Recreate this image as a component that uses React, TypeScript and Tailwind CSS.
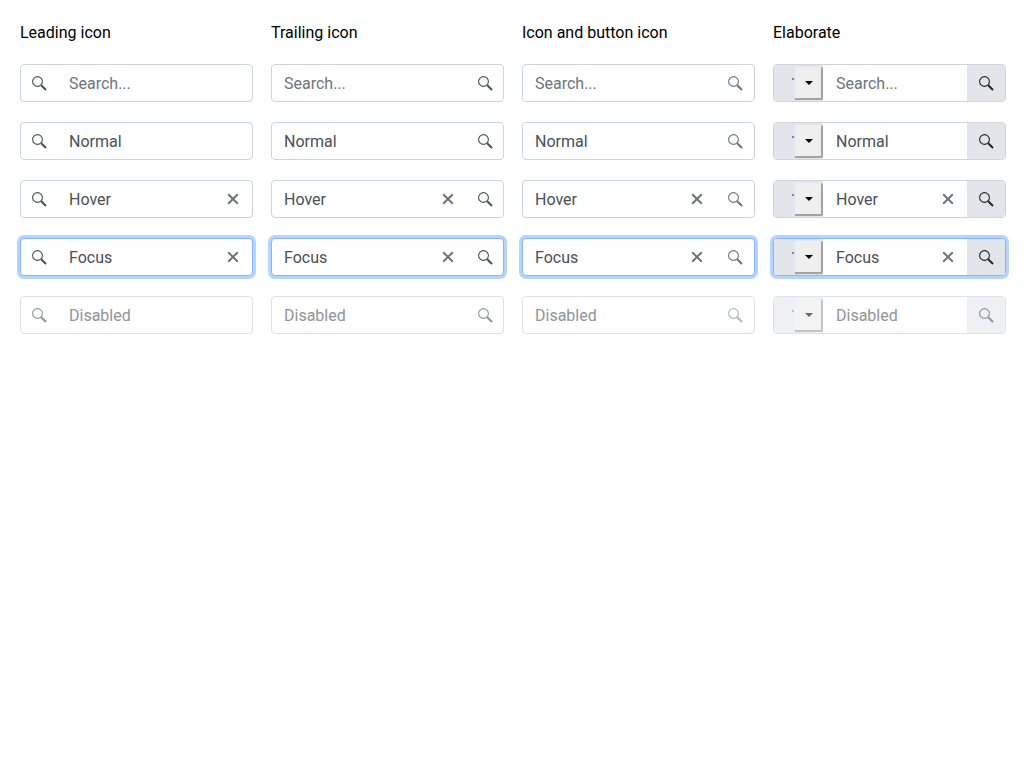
const rows = [
  { kind: "placeholder", label: "Search..." },
  { kind: "normal", label: "Normal" },
  { kind: "hover", label: "Hover" },
  { kind: "focus", label: "Focus" },
  { kind: "disabled", label: "Disabled" },
];

const headers = ["Leading icon", "Trailing icon", "Icon and button icon", "Elaborate"];

type Row = { kind: string; label: string };

const SearchIcon = () => (
  <svg viewBox="0 0 15 15" className="size-[15px]" fill="none" stroke="currentColor">
    <circle cx="5.5" cy="5.5" r="4.9" strokeWidth="1.1" />
    <path d="M9.2 9.2 L14 14" strokeWidth="2" />
  </svg>
);

const ClearIcon = () => (
  <svg viewBox="0 0 12 12" className="size-[12px]" fill="none" stroke="currentColor" strokeWidth="2">
    <path d="M1.2 1.2 L10.8 10.8 M10.8 1.2 L1.2 10.8" />
  </svg>
);

const Shell = ({ row, children }: { row: Row; children: React.ReactNode }) => (
  <div
    className={`flex h-[38px] items-stretch overflow-hidden rounded border bg-white ${
      row.kind === "focus"
        ? "border-[#86b7fe] shadow-[0_0_0_3px_#b6d4fe] overflow-visible"
        : row.kind === "disabled"
          ? "border-[#dee2e6]"
          : "border-[#ced4da]"
    }`}
  >
    {children}
  </div>
);

const Field = ({ row, className }: { row: Row; className: string }) => (
  <input
    readOnly
    disabled={row.kind === "disabled"}
    placeholder={row.kind === "placeholder" ? row.label : undefined}
    defaultValue={row.kind === "placeholder" ? undefined : row.label}
    className={`min-w-0 flex-1 bg-transparent pt-[2px] text-base leading-6 outline-none placeholder:text-[#6c757d] ${
      row.kind === "disabled" ? "text-[#8f9499]" : "text-[#495057]"
    } ${className}`}
  />
);

const hasClear = (row: Row) => row.kind === "hover" || row.kind === "focus";

const Clear = () => (
  <div className="flex w-[38px] items-center justify-center text-[#6c757d]">
    <ClearIcon />
  </div>
);

const Leading = ({ row }: { row: Row }) => (
  <Shell row={row}>
    <div className={`flex w-[26px] items-center justify-end pt-px ${row.kind === "disabled" ? "text-[#8f9499]" : "text-[#495057]"}`}>
      <SearchIcon />
    </div>
    <Field row={row} className="pl-[22px]" />
    {hasClear(row) && <Clear />}
  </Shell>
);

const Trailing = ({ row }: { row: Row }) => (
  <Shell row={row}>
    <Field row={row} className="pl-[12px]" />
    {hasClear(row) && <Clear />}
    <div className={`flex w-[36px] items-center justify-center pl-px pt-px ${row.kind === "disabled" ? "text-[#8f9499]" : "text-[#495057]"}`}>
      <SearchIcon />
    </div>
  </Shell>
);

const IconButton = ({ row }: { row: Row }) => (
  <Shell row={row}>
    <Field row={row} className="pl-[12px]" />
    {hasClear(row) && <Clear />}
    <div className={`flex w-[38px] items-center justify-center pl-px pt-px ${row.kind === "disabled" ? "text-[#adb5bd]" : "text-[#6c757d]"}`}>
      <SearchIcon />
    </div>
  </Shell>
);

const Elaborate = ({ row }: { row: Row }) => {
  const off = row.kind === "disabled";
  return (
    <Shell row={row}>
      <div className={`flex w-[49px] items-start rounded-l-[3px] ${off ? "bg-[#eef0f3]" : "bg-[#e2e5ea]"}`}>
        <div className={`ml-[18px] mt-[13px] size-[2px] ${off ? "bg-[#c0c2c6]" : "bg-[#85888d]"}`} />
        <div
          className={`ml-px mt-[2px] flex h-[33px] w-[28px] items-center justify-center rounded-r-[2px] border-r-2 border-b-2 pl-[2px] ${
            off ? "border-[#c4c4c4] bg-[#f3f3f3]" : "border-[#a3a3a3] bg-[#efefef]"
          }`}
        >
          <div
            className={`h-0 w-0 border-x-[4px] border-t-[4px] border-x-transparent ${
              off ? "border-t-[#666]" : "border-t-black"
            }`}
          />
        </div>
      </div>
      <Field row={row} className="pl-[13px]" />
      {hasClear(row) && <Clear />}
      <div
        className={`flex w-[38px] items-center justify-center rounded-r-[3px] pl-px pt-px ${
          off ? "bg-[#eef0f3] text-[#8f9499]" : "bg-[#e2e5ea] text-[#212529]"
        }`}
      >
        <SearchIcon />
      </div>
    </Shell>
  );
};

export default function App() {
  return (
    <div className="grid grid-cols-[repeat(4,233px)] gap-x-[18px] gap-y-[20px] p-5 font-['Roboto',sans-serif]">
      {headers.map((h) => (
        <div key={h} className="h-6 pt-px text-base leading-6 text-black">
          {h}
        </div>
      ))}
      {rows.map((row) => (
        <div key={row.kind} className="contents">
          <Leading row={row} />
          <Trailing row={row} />
          <IconButton row={row} />
          <Elaborate row={row} />
        </div>
      ))}
    </div>
  );
}
